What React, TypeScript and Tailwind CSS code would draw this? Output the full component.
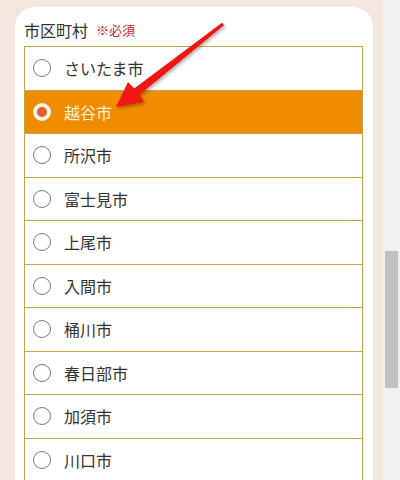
import React from "react";

const cities = ["さいたま市", "越谷市", "所沢市", "富士見市", "上尾市", "入間市", "桶川市", "春日部市", "加須市", "川口市", "川越市"];

function Radio({ checked }: { checked: boolean }) {
  if (checked) {
    return (
      <span className="flex h-[18px] w-[18px] shrink-0 items-center justify-center rounded-full bg-[#fdf3e6]">
        <span className="h-[10px] w-[10px] rounded-full bg-[#e0602a]" />
      </span>
    );
  }
  return <span className="h-[18px] w-[18px] shrink-0 rounded-full border border-[#7a7a7a] bg-white" />;
}

export default function App() {
  return (
    <div
      className="relative flex h-[480px] w-[400px] overflow-hidden"
      style={{ fontFamily: '"Noto Sans CJK JP", "Noto Sans", sans-serif' }}
    >
      <div className="h-full w-[383px] bg-[#f3e6de] pl-[15px] pt-[7px]">
        <div className="w-[358px] rounded-[20px] bg-white pl-[9px] pr-[10px] pt-[9px]">
          <div className="mb-[3px] flex h-[27px] items-center gap-[8px] leading-none">
            <span className="text-[16px] text-[#333]">市区町村</span>
            <span className="text-[13px] text-[#d0202a]">※必須</span>
          </div>
          <div className="border-x border-t border-[#c9a24e]">
            {cities.map((c, i) => {
              const sel = i === 1;
              return (
                <div
                  key={c}
                  className={`flex h-[43.5px] items-center gap-[13px] border-b border-[#c9a24e] pl-[8px] ${sel ? "bg-[#f08c00]" : "bg-white"}`}
                >
                  <Radio checked={sel} />
                  <span className={`text-[16px] leading-none ${sel ? "text-[#fff2d6]" : "text-[#333]"}`}>{c}</span>
                </div>
              );
            })}
          </div>
        </div>
      </div>
      <div className="relative h-full w-[17px] bg-[#f0f0f0]">
        <div className="absolute left-[2px] top-[251px] h-[137px] w-[13px] bg-[#c1c1c1]" />
      </div>
      <svg className="pointer-events-none absolute left-0 top-0" width="400" height="480" viewBox="0 0 400 480">
        <defs>
          <filter id="sh" x="-20%" y="-20%" width="140%" height="140%">
            <feDropShadow dx="1.5" dy="2" stdDeviation="1.5" floodColor="#000" floodOpacity="0.3" />
          </filter>
        </defs>
        <polygon
          points="116,107 144,102 139.5,94.8 224,25.2 222,22.8 134.2,88.5 128,82"
          fill="#f01414"
          filter="url(#sh)"
        />
      </svg>
    </div>
  );
}
